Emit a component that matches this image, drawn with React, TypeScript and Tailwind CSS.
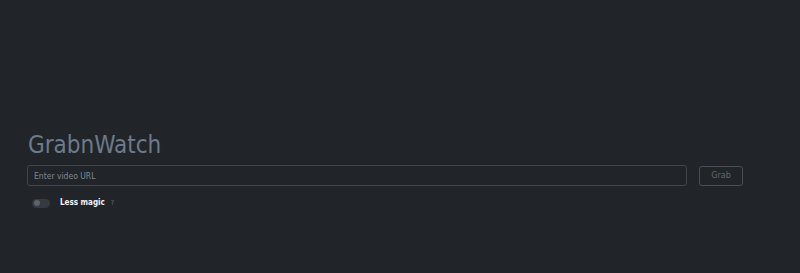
import { useState } from "react"

export default function App() {
  const [lessMagic, setLessMagic] = useState(false)

  return (
    <div
      className="min-h-[273px] w-full bg-[#212529] flex flex-col pt-[130px] pl-[27px] pr-[57px]"
      style={{ fontFamily: '"DejaVu Sans Condensed", "DejaVu Sans", sans-serif' }}
    >
      <h1 className="text-[24px] leading-[30px] text-[#6c7a89] ml-[1px]">GrabnWatch</h1>
      <div className="mt-[5px] flex items-center gap-[12px]">
        <input
          className="h-[21px] flex-1 rounded-[3px] border border-[#41464b] bg-transparent px-[6px] text-[8.5px] text-[#adb5bd] placeholder:text-[#80868c] outline-none"
          placeholder="Enter video URL"
        />
        <button className="h-[20px] w-[44px] rounded-[3px] border border-[#4a4f54] text-[9px] text-[#5f656b]">
          Grab
        </button>
      </div>
      <div className="mt-[11px] ml-[5px] flex items-center">
        <button
          onClick={() => setLessMagic(!lessMagic)}
          className="relative h-[9px] w-[18px] rounded-full bg-[#343a40]"
        >
          <span className="absolute left-[2px] top-[1.5px] h-[6px] w-[6px] rounded-full bg-[#5c636a]" />
        </button>
        <span className="ml-[10px] text-[8px] font-semibold text-[#f1f3f5]">Less magic</span>
        <span className="ml-[6px] text-[7px] text-[#6c757d]">?</span>
      </div>
    </div>
  )
}
